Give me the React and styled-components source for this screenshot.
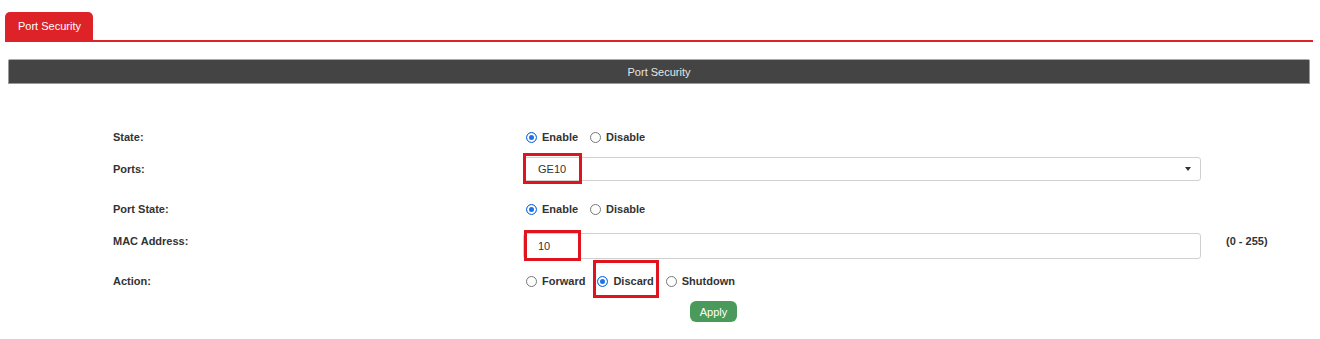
import React from 'react'
import styled, { createGlobalStyle } from 'styled-components'

const GlobalStyle = createGlobalStyle`
  body {
    margin: 0;
    background: #fff;
    font-family: "Liberation Sans", Arial, sans-serif;
    color: #333;
  }
`

const TabBar = styled.div`
  display: flex;
  margin: 12px 7px 0 5px;
  border-bottom: 2px solid #dd2228;
`

const Tab = styled.div`
  height: 28px;
  line-height: 28px;
  padding: 0 12px 0 13px;
  background: #dd2228;
  color: #fff;
  font-size: 11px;
  border-radius: 5px 5px 0 0;
`

const PanelHeader = styled.div`
  margin: 17px 10px 0 8px;
  height: 25px;
  line-height: 25px;
  background: #444;
  border: 1px solid #999;
  border-top-color: #aaa;
  box-sizing: border-box;
  border-radius: 2px 2px 0 0;
  color: #e6e6e6;
  font-size: 11px;
  text-align: center;
`

const Form = styled.div`
  display: flex;
  flex-direction: column;
  margin-top: 43px;
  padding-left: 113px;
`

const Row = styled.div`
  display: grid;
  grid-template-columns: 410px 678px auto;
  align-items: center;
  height: ${p => p.$h}px;
`

const Label = styled.div`
  font-size: 11px;
  font-weight: bold;
  color: #333;
  margin-top: ${p => p.$shift || 0}px;
`

const Help = styled.div`
  font-size: 11px;
  font-weight: bold;
  color: #333;
  margin-left: 25px;
  margin-top: ${p => p.$shift || 0}px;
`

const Control = styled.div`
  position: relative;
  display: flex;
  align-items: center;
`

const RadioGroup = styled.div`
  display: flex;
  align-items: center;
  padding-left: 3px;
`

const RadioItem = styled.label`
  position: relative;
  display: flex;
  align-items: center;
  gap: 5px;
  margin-right: 12px;
  font-size: 11px;
  font-weight: bold;
  color: #333;
`

const Dot = styled.span`
  width: 11px;
  height: 11px;
  box-sizing: border-box;
  border-radius: 50%;
  border: 1px solid ${p => (p.$on ? '#1a73e8' : '#777')};
  background: ${p => (p.$on ? '#1a73e8' : '#fff')};
  box-shadow: ${p => (p.$on ? 'inset 0 0 0 2px #fff' : 'none')};
`

const Field = styled.div`
  display: flex;
  align-items: center;
  justify-content: space-between;
  width: 100%;
  height: ${p => p.$h}px;
  box-sizing: border-box;
  border: 1px solid #d0d0d0;
  border-radius: 3px;
  padding: 0 9px 0 14px;
  font-size: 11px;
  color: #333;
  background: #fff;
`

const Caret = styled.span`
  width: 0;
  height: 0;
  border-left: 3px solid transparent;
  border-right: 3px solid transparent;
  border-top: 4px solid #333;
`

const Mark = styled.span`
  position: absolute;
  left: ${p => p.$l}px;
  top: ${p => p.$t}px;
  width: ${p => p.$w}px;
  height: ${p => p.$hh}px;
  box-sizing: border-box;
  border: 3px solid #e0141f;
  pointer-events: none;
`

const ButtonRow = styled.div`
  padding-left: 690px;
  margin-top: 4px;
`

const ApplyButton = styled.button`
  width: 47px;
  height: 21px;
  border: none;
  border-radius: 6px;
  background: #4a9b5b;
  color: #fff;
  font-family: "Liberation Sans", Arial, sans-serif;
  font-size: 11px;
  padding: 0;
`

function Radios({ options, value, mark }) {
  return (
    <RadioGroup>
      {options.map(o => (
        <RadioItem key={o}>
          <Dot $on={o === value} />
          {o}
          {mark === o && <Mark $l={-4} $t={-15} $w={66} $hh={38} />}
        </RadioItem>
      ))}
    </RadioGroup>
  )
}

export default function App() {
  return (
    <>
      <GlobalStyle />
      <TabBar>
        <Tab>Port Security</Tab>
      </TabBar>
      <PanelHeader>Port Security</PanelHeader>
      <Form>
        <Row $h={20}>
          <Label>State:</Label>
          <Control>
            <Radios options={['Enable', 'Disable']} value="Enable" />
          </Control>
        </Row>
        <Row $h={44}>
          <Label>Ports:</Label>
          <Control>
            <Field $h={24}>
              GE10
              <Caret />
            </Field>
            <Mark $l={0} $t={-4} $w={59} $hh={31} />
          </Control>
        </Row>
        <Row $h={36}>
          <Label>Port State:</Label>
          <Control>
            <Radios options={['Enable', 'Disable']} value="Enable" />
          </Control>
        </Row>
        <Row $h={38}>
          <Label $shift={-10}>MAC Address:</Label>
          <Control>
            <Field $h={26}>10</Field>
            <Mark $l={1} $t={-3} $w={57} $hh={31} />
          </Control>
          <Help $shift={-10}>(0 - 255)</Help>
        </Row>
        <Row $h={32}>
          <Label>Action:</Label>
          <Control>
            <Radios options={['Forward', 'Discard', 'Shutdown']} value="Discard" mark="Discard" />
          </Control>
        </Row>
      </Form>
      <ButtonRow>
        <ApplyButton>Apply</ApplyButton>
      </ButtonRow>
    </>
  )
}
